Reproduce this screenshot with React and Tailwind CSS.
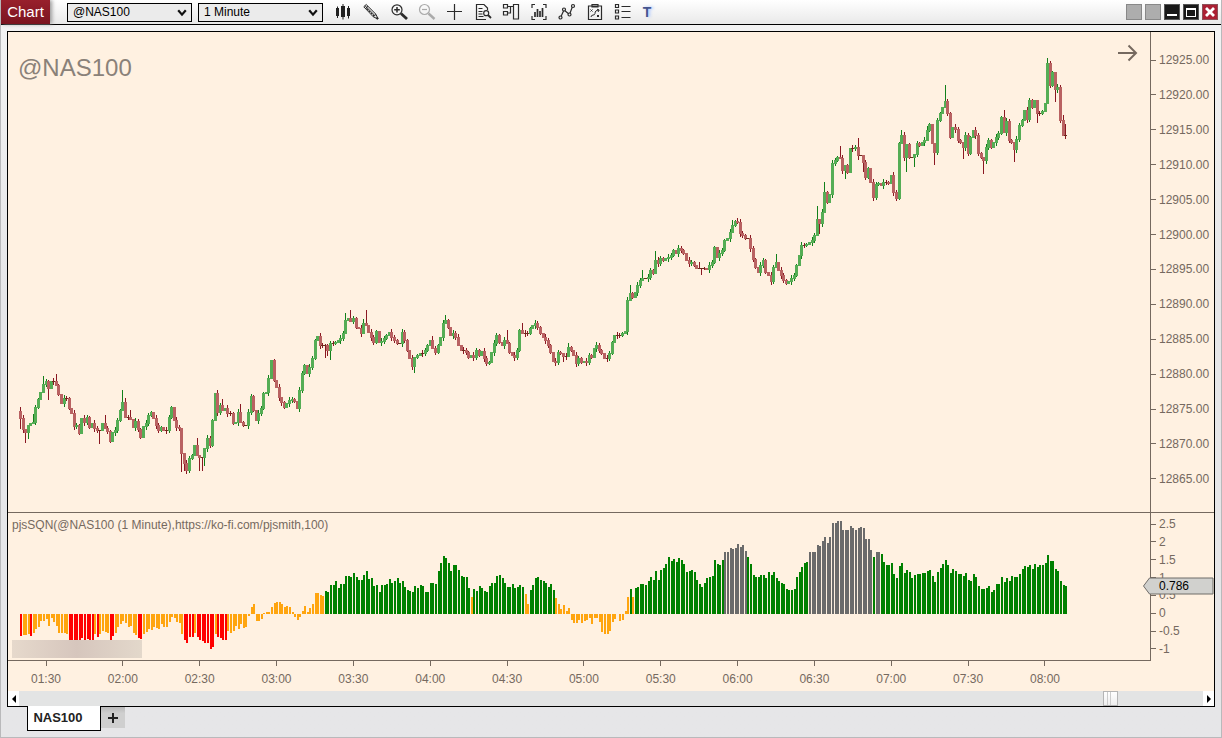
import { useState } from 'react'

const BAR_STEP = 2.5615
const FIRST_BAR = 12
const PLOT_WIDTH = 1142
const PRICE_HEIGHT = 480
const STUDY_HEIGHT = 147
const STUDY_ZERO = 101

// closes per one minute bar, measured down from the base of each stretch (3 units = 1px)
const STRETCHES = [
  {
    base: 984,
    closes: [
      175, 208, 215, 195, 190, 185, 142, 118, 95, 72, 62, 85, 62, 62, 75, 102, 130, 115, 113, 145, 160, 197, 195, 218,
      175, 185, 170, 200, 188, 205, 210, 210, 188, 205, 212, 243, 215, 210, 180, 150, 127, 172, 172, 178, 202, 182, 208,
      230, 197, 190, 165, 157, 175, 195, 210, 200, 210, 210, 170, 142, 180, 200, 203, 280, 310, 330, 295, 285, 255, 285,
      290, 290, 265, 235, 255, 180, 100, 155, 135, 150, 145, 160, 160, 190, 185, 155, 185, 195, 195, 155, 107, 150, 180,
      160, 145, 100, 95, 55, 0, 60, 80, 110, 125, 140, 130, 120, 118, 122, 145, 90, 40,
    ],
  },
  {
    base: 774,
    closes: [
      225, 250, 230, 205, 150, 138, 165, 165, 165, 180, 160, 160, 155, 150, 145, 130, 90, 85, 92, 85, 110, 115, 130,
      100, 105, 125, 140, 155, 122, 155, 152, 145, 135, 125, 140, 150, 160, 160, 125, 150, 180, 205, 228, 200, 195, 190,
      188, 180, 165, 150, 175, 185, 165, 140, 100, 90, 110, 135, 128, 140, 165, 180, 180, 185, 200, 195, 200, 180, 195,
      182, 205, 218, 215, 185, 160, 135, 155, 165, 150, 158, 185, 195, 200, 180, 120, 130, 130, 128, 115, 105, 100, 110,
      130, 140, 150, 165, 185, 212, 215, 185, 190, 198, 198, 170, 180, 195, 218, 205, 215, 213, 215, 195, 200, 175, 165,
      180, 190, 205, 205, 190, 155, 135, 135, 135, 128, 122,
    ],
  },
  {
    base: 504,
    closes: [
      300, 280, 290, 275, 255, 240, 235, 235, 230, 210, 220, 180, 190, 175, 180, 175, 170, 165, 150, 160, 143, 150, 158,
      180, 190, 185, 195, 203, 205, 205, 205, 208, 195, 185, 140, 170, 160, 150, 120, 115, 95, 75, 62, 65, 98, 105, 115,
      115, 145, 178, 200, 215, 195, 180, 215, 225, 243, 200, 185, 210, 225, 240, 248, 243, 235, 225, 195, 165, 135,
    ],
  },
  {
    base: 54,
    closes: [
      585, 583, 575, 570, 555, 508, 520, 485, 425, 455, 432, 340, 330, 322, 325, 360, 345, 365, 295, 295, 290, 315, 315,
      335, 380, 355, 395, 440, 403, 400, 405, 395, 395, 400, 375, 425, 445, 278, 255, 322, 283, 320, 320, 312, 280, 285,
      275, 270, 240, 222, 280, 305, 210, 188, 170, 152, 190, 260, 232, 238, 270, 275, 290, 255, 310, 260, 240, 255, 310,
      320, 330, 292, 270, 290, 275, 260, 250, 200, 245, 213, 270, 275, 298, 268, 225, 210, 180, 208, 150, 170, 150, 190,
      188, 183, 160, 38, 105, 65, 118, 110, 210, 255, 255,
    ],
  },
]

// long wicks, [above, below] the body in px
const LONG_WICKS = {
  0: [4, 10], 2: [0, 10], 3: [0, 6], 5: [8, 0], 9: [8, 0], 11: [1, 11], 14: [7, 0], 31: [0, 13], 33: [8, 0],
  40: [12, 0], 41: [4, 0], 43: [7, 0], 63: [0, 18], 64: [0, 7], 69: [7, 0], 70: [0, 13], 71: [0, 13], 72: [0, 8],
  79: [6, 0], 86: [8, 0], 98: [0, 0], 102: [0, 3], 119: [1, 12], 120: [1, 5], 121: [2, 9], 127: [7, 0], 129: [8, 0],
  134: [4, 0], 135: [13, 0], 154: [0, 6], 161: [4, 0], 166: [5, 0], 171: [3, 0], 190: [10, 0], 196: [7, 0],
  212: [0, 5], 214: [4, 0], 238: [8, 0], 243: [8, 0], 248: [9, 0], 265: [6, 0], 266: [0, 6], 278: [5, 0],
  280: [3, 1], 295: [8, 0], 311: [13, 0], 312: [0, 10], 314: [10, 0], 320: [11, 0], 322: [0, 8], 327: [9, 4],
  329: [0, 9], 344: [5, 0], 346: [0, 14], 349: [0, 9], 354: [4, 0], 357: [0, 12], 361: [16, 0], 368: [0, 11],
  376: [0, 13], 384: [7, 0], 388: [0, 12], 397: [0, 9], 401: [5, 0], 404: [0, 12], 407: [5, 0], 408: [11, 3],
}

// study value per bar, 108 units = 1.0
const STUDY = [
  -65, -62, -62, -60, -65, -57, -45, -38, -22, -20, -14, -35, -12, -25, -35, -57, -57, -57, -60, -78, -78, -78, -78,
  -78, -72, -78, -75, -78, -78, -60, -70, -60, -50, -55, -57, -78, -65, -57, -40, -30, -22, -28, -40, -35, -57, -62,
  -72, -75, -60, -55, -45, -48, -40, -42, -45, -30, -40, -40, -25, -10, -12, -25, -28, -60, -78, -88, -70, -68, -58,
  -70, -78, -82, -88, -88, -105, -98, -60, -70, -72, -78, -78, -50, -58, -50, -35, -45, -30, -42, -38, -5, 22, 30,
  -20, -22, -15, 3, 5, 5, 22, 32, 35, 36, 30, 20, 25, 22, 5, -8, -18, -10, 8, 25, 5, 18, 30, 63, 64, 58, 54, 68, 65,
  88, 87, 98, 78, 90, 90, 115, 115, 110, 122, 110, 102, 102, 118, 128, 105, 108, 85, 87, 67, 87, 87, 90, 105, 93, 98,
  108, 93, 98, 80, 72, 70, 65, 83, 78, 87, 83, 65, 65, 92, 92, 90, 130, 152, 174, 168, 152, 130, 147, 147, 132, 115,
  110, 110, 78, 50, 75, 70, 83, 77, 70, 65, 83, 92, 92, 114, 117, 107, 93, 82, 82, 90, 77, 80, 87, 82, 60, 30, 72,
  87, 108, 111, 102, 100, 92, 82, 90, 72, 47, 30, 15, 27, 10, 17, -17, -27, -27, -18, -27, -20, -17, -12, -30, -12,
  -12, -23, -55, -60, -60, -50, -25, -15, 0, -20, -17, 10, 50, 75, 50, 78, 80, 90, 90, 87, 100, 110, 102, 130, 102,
  132, 138, 150, 172, 158, 165, 156, 168, 163, 150, 126, 130, 132, 126, 102, 90, 80, 92, 108, 110, 114, 162, 150, 147,
  162, 186, 186, 198, 195, 198, 210, 200, 207, 189, 171, 150, 117, 112, 112, 117, 117, 108, 126, 116, 126, 108, 99,
  93, 90, 76, 72, 72, 76, 111, 126, 141, 153, 156, 186, 186, 186, 207, 204, 219, 231, 213, 231, 273, 273, 279, 279,
  252, 252, 252, 264, 258, 252, 258, 261, 258, 225, 225, 192, 171, 186, 186, 180, 156, 147, 147, 153, 120, 108, 144,
  153, 122, 132, 126, 108, 117, 120, 120, 123, 123, 129, 132, 114, 96, 126, 138, 150, 162, 147, 123, 135, 129, 120,
  120, 114, 123, 102, 99, 120, 111, 84, 75, 75, 78, 84, 66, 72, 90, 90, 111, 96, 108, 99, 114, 111, 111, 120, 135,
  144, 141, 147, 135, 150, 141, 147, 147, 153, 177, 159, 159, 135, 129, 99, 87, 84,
]

const PRICES = [
  '12925.00', '12920.00', '12915.00', '12910.00', '12905.00', '12900.00', '12895.00', '12890.00', '12885.00',
  '12880.00', '12875.00', '12870.00', '12865.00',
]
const STUDY_LABELS = ['2.5', '2', '1.5', '1', '0.5', '0', '-0.5', '-1']
const TIMES = [
  '01:30', '02:00', '02:30', '03:00', '03:30', '04:00', '04:30', '05:00', '05:30', '06:00', '06:30', '07:00',
  '07:30', '08:00',
]

const levels = STRETCHES.flatMap(({ base, closes }) => closes.map((c) => Math.round((base + c) / 3)))

const candles = levels.map((close, i) => {
  const open = i === 0 ? close - 7 : levels[i - 1]
  const [above, below] = LONG_WICKS[i] ?? [(i * 7) % 4, (i * 11) % 4]
  const flat = Math.abs(open - close) < 1
  const top = Math.min(open, close)
  const height = flat ? 1 : Math.abs(open - close) + 1
  return { x: Math.round(FIRST_BAR + i * BAR_STEP), up: close < open, flat, top, height, above, below }
})

function bodyColor({ up, flat }) {
  if (flat) return '#6b2a1c'
  return up ? '#55ad55' : '#b96262'
}

function studyColor(v) {
  if (v >= 184) return '#6b6b6b'
  if (v >= 65) return '#008000'
  if (v > -65) return '#ffa50f'
  return '#ff0000'
}

function PriceBars() {
  return (
    <svg
      className="block size-full"
      viewBox={`0 0 ${PLOT_WIDTH} ${PRICE_HEIGHT}`}
      preserveAspectRatio="none"
      shapeRendering="crispEdges"
      role="img"
      aria-label="@NAS100 price"
    >
      {candles.map((c, i) => (
        <g key={i}>
          <rect
            x={c.x}
            y={c.top - c.above}
            width="1"
            height={c.height + c.above + c.below}
            fill={c.up ? '#12801a' : '#8a1822'}
          />
          <rect x={c.x - 1} y={c.top} width="3" height={c.height} fill={bodyColor(c)} />
        </g>
      ))}
    </svg>
  )
}

function StudyBars() {
  return (
    <svg
      className="block size-full"
      viewBox={`0 0 ${PLOT_WIDTH} ${STUDY_HEIGHT}`}
      preserveAspectRatio="none"
      shapeRendering="crispEdges"
      role="img"
      aria-label="pjsSQN study"
    >
      {STUDY.map((v, i) => {
        const height = Math.round(Math.abs(v) / 3)
        return (
          <rect
            key={i}
            x={Math.round(FIRST_BAR + i * BAR_STEP)}
            y={v > 0 ? STUDY_ZERO - height : STUDY_ZERO}
            width="2"
            height={height}
            fill={studyColor(v)}
          />
        )
      })}
    </svg>
  )
}

function AxisLabels({ labels }) {
  return labels.map((label) => (
    <div key={label} className="flex h-3.5 items-center gap-[3px] leading-[14px]">
      <span className="h-px w-[5px] bg-[#75695f]" />
      <span>{label}</span>
    </div>
  ))
}

function ToolSelect({ label, value, options }) {
  return (
    <div className="relative">
      <select
        aria-label={label}
        defaultValue={value}
        className="block h-[19px] w-[125px] appearance-none border border-black bg-[#ebebeb] pl-[5px] text-[12px] leading-4 text-black outline-none"
      >
        {options.map((o) => (
          <option key={o}>{o}</option>
        ))}
      </select>
      <svg className="pointer-events-none absolute top-1.5 right-[5px] h-2 w-2.5" viewBox="0 0 10 8" fill="none">
        <path d="M1.2 1.2 5 5.6 8.8 1.2" stroke="#111" strokeWidth="2.2" />
      </svg>
    </div>
  )
}

const TOOLS = [
  {
    name: 'Chart type',
    icon: (
      <g fill="#222" stroke="none">
        <path d="M3 6h3v8H3zM4 4.500h1v11.500H4zM8 4h4v11H8zM9.500 2h1v15.500h-1zM14 6h3v8h-3zM15 4h1v12.500h-1z" />
      </g>
    ),
  },
  {
    name: 'Draw',
    icon: (
      <g strokeWidth="1">
        <path d="M2.800 4.800 5.200 2.500 15 12.300l2 4.700-4.700-2.200z" fill="#e8e8e8" />
        <path d="m4 3.700 9.800 9.800M4.500 6.500 7 4.200M12.300 14.800l2.700-2.500" />
        <path d="m5.500 6.500 7.500 7.500" strokeDasharray="2 1" />
        <path d="m15.500 15.500 1.500 1.500" strokeWidth="2.200" />
      </g>
    ),
  },
  {
    name: 'Zoom in',
    icon: (
      <g>
        <circle cx="8" cy="7.800" r="5" />
        <path d="M8 5v5.600M5.200 7.800h5.600" strokeWidth="1.500" />
        <path d="m12 11.500 6 5.500" strokeWidth="2.800" />
      </g>
    ),
  },
  {
    name: 'Zoom out',
    icon: (
      <g stroke="#aaa">
        <circle cx="7.500" cy="7.500" r="5" />
        <path d="M5 7.500h5" />
        <path d="m11.500 11.500 6 5.500" strokeWidth="2.400" />
      </g>
    ),
  },
  { name: 'Crosshair', icon: <path d="M9.500 2v16M2 9.500h15" /> },
  {
    name: 'Inspect',
    icon: (
      <g>
        <path d="M14.500 8V6l-3.500-3.500H3.500v15h9.500M5.500 6.500h4M5.500 9.500h4M5.500 12h4M5.500 14.500h5" />
        <circle cx="13.200" cy="11.200" r="2.500" />
        <path d="m15 13 3 3" strokeWidth="1.800" />
      </g>
    ),
  },
  {
    name: 'Compare',
    icon: <path d="M2.500 2.500h4v3.500h-4zM2.500 9.500h4V13h-4zM12.500 2.500h5v14.500h-5zM6.500 4.500h6M6.500 11h3V4.500" />,
  },
  {
    name: 'Indicators',
    icon: (
      <g>
        <path d="M6 2.500H3V6M14 2.500h3V6M6 17.500H3V14M14 17.500h3V14" />
        <path d="M6 10v5M8.500 7v8M11 9v6M13.500 6v9" strokeWidth="1.700" />
      </g>
    ),
  },
  {
    name: 'Trend lines',
    icon: (
      <g>
        <path d="m4 14.500 3-6.500 5.500 4.500 3-8" />
        <g fill="#eee">
          <circle cx="3.500" cy="15.500" r="1.500" />
          <circle cx="7" cy="7.500" r="1.500" />
          <circle cx="12.500" cy="12.500" r="1.500" />
          <circle cx="16" cy="4" r="1.500" />
        </g>
      </g>
    ),
  },
  {
    name: 'Strategy',
    icon: (
      <g>
        <path d="M3.500 4h13v13.500h-13zM7 2.500h6V5H7z" />
        <path
          d="m5.500 7.500 2 2m0-2-2 2M12 13l2 2m0-2-2 2M6 15c0-3 4-1 4-3.500S11 8.500 14 8m-2-.8 2.200.8-1.200 2"
          strokeWidth="1"
        />
      </g>
    ),
  },
  {
    name: 'Objects',
    icon: <path d="M2.500 2.500h3v3h-3zM2.500 8h3v3h-3zM2.500 14h3v3h-3zM8.500 4.500h9M8.500 9.500h9M8.500 15.500h9" />,
  },
]

const WINDOW_BUTTON = 'flex size-4 items-center justify-center border'

function Toolbar() {
  return (
    <header className="flex h-[25px] items-center border-b border-black bg-linear-to-b from-white to-[#e9e9e9]">
      <h1 className="flex h-6 w-[49px] items-center justify-center bg-linear-to-b from-[#98202c] to-[#7b1420] text-[15px] text-white shadow-[2px_0_4px_#999]">
        Chart
      </h1>
      <div className="ml-[17px] flex gap-1.5">
        <ToolSelect label="Symbol" value="@NAS100" options={['@NAS100', '@US500', '@US30']} />
        <ToolSelect label="Interval" value="1 Minute" options={['1 Minute', '5 Minute', '1 Hour']} />
      </div>
      <nav className="ml-1.5 flex">
        {TOOLS.map(({ name, icon }) => (
          <button key={name} type="button" aria-label={name} className="flex h-6 w-7 items-center justify-center">
            <svg className="size-5" viewBox="0 0 20 20" fill="none" stroke="#2b2b2b" strokeWidth="1.2">
              {icon}
            </svg>
          </button>
        ))}
        <button
          type="button"
          className="h-6 w-5 text-[14px] leading-6 font-bold text-[#46568f] [text-shadow:2px_0_3px_#a9c4ff]"
        >
          T
        </button>
      </nav>
      <div className="ml-auto flex gap-[3px] pr-[3px]">
        <button type="button" aria-label="Pin" className={`${WINDOW_BUTTON} border-[#888] bg-[#adadad]`} />
        <button type="button" aria-label="Link" className={`${WINDOW_BUTTON} border-[#888] bg-[#adadad]`} />
        <button type="button" aria-label="Minimize" className={`${WINDOW_BUTTON} border-[#555] bg-[#181818]`}>
          <span className="mt-1.5 h-0.5 w-2.5 bg-white" />
        </button>
        <button type="button" aria-label="Maximize" className={`${WINDOW_BUTTON} border-[#555] bg-[#181818]`}>
          <span className="h-[9px] w-2.5 border border-t-2 border-white" />
        </button>
        <button type="button" aria-label="Close" className={`${WINDOW_BUTTON} border-[#8d5058] bg-[#ab1f33]`}>
          <svg className="size-3" viewBox="0 0 12 12">
            <path d="m2 2 8 8M10 2l-8 8" stroke="#fff" strokeWidth="2.8" />
          </svg>
        </button>
      </div>
    </header>
  )
}

function PricePane() {
  return (
    <section className="flex min-h-0 flex-1 border-b border-[#75695f]">
      <div className="relative min-w-0 flex-1">
        <PriceBars />
        <h2 className="absolute top-5 left-2.5 text-[24px] leading-8 text-[#8a8179]">@NAS100</h2>
        <button type="button" aria-label="Go to latest bar" className="absolute top-3 right-3">
          <svg className="h-[18px] w-5" viewBox="0 0 20 18" fill="none" stroke="#75695f" strokeWidth="2">
            <path d="M0 9h18M10.500 1.500 18 9l-7.500 7.500" />
          </svg>
        </button>
      </div>
      <div className="flex w-16 flex-col justify-between border-l border-[#75695f] pt-[21px] pb-[26px]">
        <AxisLabels labels={PRICES} />
      </div>
    </section>
  )
}

function StudyPane() {
  return (
    <section className="relative flex h-[148px]">
      <div className="relative min-w-0 flex-1 border-b border-[#75695f]">
        <StudyBars />
        <h2 className="absolute top-1 left-1 leading-4">pjsSQN(@NAS100 (1 Minute),https://ko-fi.com/pjsmith,100)</h2>
        <div className="absolute bottom-0.5 left-1 h-[18px] w-[130px] bg-linear-to-r from-[#e6d9cc] via-[#d6c6bd] to-[#e3d8cb]" />
      </div>
      <div className="flex w-16 flex-col justify-between border-l border-[#75695f] pt-1 pb-[5px]">
        <AxisLabels labels={STUDY_LABELS} />
      </div>
      <div className="absolute top-16 right-0 h-[18px] w-[71px]">
        <svg className="absolute inset-0 size-full" viewBox="0 0 71 18">
          <path d="M.5 9 6.500 1h63.500v16H6.500z" fill="#d1d1ce" stroke="#6f6c69" />
        </svg>
        <span className="relative block pl-4 leading-[18px] text-black">0.786</span>
      </div>
    </section>
  )
}

function TimeAxis() {
  return (
    <div className="flex h-[30px] justify-between pr-[149px] pl-[18px]">
      {TIMES.map((t) => (
        <div key={t} className="flex w-10 flex-col items-center">
          <span className="h-[5px] w-px bg-[#75695f]" />
          <span className="mt-1.5 leading-[14px]">{t}</span>
        </div>
      ))}
    </div>
  )
}

function Scrollbar() {
  const [position, setPosition] = useState(927)
  return (
    <div className="flex h-[15px] bg-[#e4e4e4]">
      <button type="button" aria-label="Scroll left" className="flex w-[11px] items-center justify-center bg-white">
        <span className="border-y-4 border-r-4 border-y-transparent border-r-black" />
      </button>
      <input
        type="range"
        aria-label="Scroll position"
        min="0"
        max="1000"
        value={position}
        onChange={(e) => setPosition(Number(e.target.value))}
        className="h-[15px] min-w-0 flex-1 appearance-none bg-[#e3e4e4] [&::-webkit-slider-thumb]:h-[15px] [&::-webkit-slider-thumb]:w-[15px] [&::-webkit-slider-thumb]:appearance-none [&::-webkit-slider-thumb]:border [&::-webkit-slider-thumb]:border-[#b5b5b5] [&::-webkit-slider-thumb]:bg-[linear-gradient(90deg,transparent_3px,#ccc_3px,#ccc_4px,transparent_4px,transparent_6px,#ccc_6px,#ccc_7px,transparent_7px),linear-gradient(#fff,#eee)]"
      />
      <button type="button" aria-label="Scroll right" className="flex w-[11px] items-center justify-center bg-white">
        <span className="border-y-4 border-l-4 border-y-transparent border-l-black" />
      </button>
    </div>
  )
}

function App() {
  return (
    <main className="flex h-screen min-h-[480px] flex-col border border-t-0 border-[#b9b9bb] bg-linear-to-b from-[#f4f4f4] to-[#e6e6e8] to-40% font-['Liberation_Sans',Arial,sans-serif] text-[12px] text-[#75695f]">
      <Toolbar />
      <div className="mx-1.5 mt-1.5 flex min-h-0 flex-1 flex-col border border-black bg-[#fff1e1]">
        <PricePane />
        <StudyPane />
        <TimeAxis />
        <Scrollbar />
      </div>
      <footer className="flex h-[30px] items-start pl-[26px]">
        <button
          type="button"
          className="relative -mt-px h-[25px] w-[74px] border border-t-0 border-black bg-white pr-3 text-[13px] font-bold text-[#222]"
        >
          NAS100
        </button>
        <button
          type="button"
          aria-label="Add tab"
          className="flex h-[21px] w-6 items-center justify-center bg-linear-to-b from-[#b9b9b9] to-[#cfcfcf] to-30%"
        >
          <svg className="size-2.5" viewBox="0 0 10 10">
            <path d="M5 0v10M0 5h10" stroke="#222" strokeWidth="2" />
          </svg>
        </button>
      </footer>
    </main>
  )
}

export default App
